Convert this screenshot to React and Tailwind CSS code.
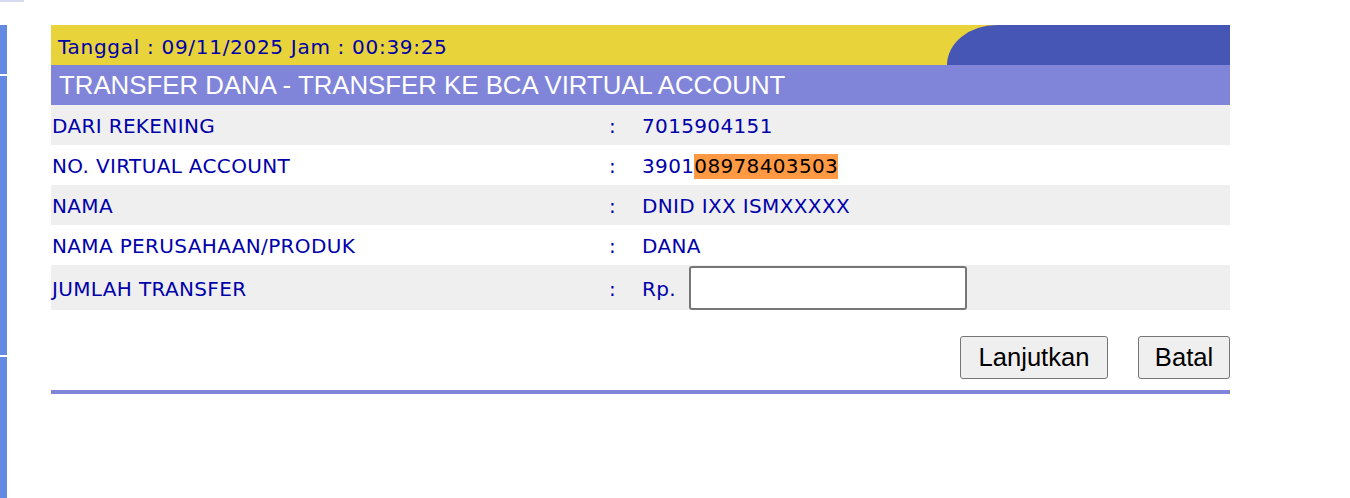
const rows = [
  { label: "DARI REKENING", value: "7015904151", bg: "bg-[#efefef]" },
  { label: "NO. VIRTUAL ACCOUNT", value: "va", bg: "bg-white" },
  { label: "NAMA", value: "DNID IXX ISMXXXXX", bg: "bg-[#efefef]" },
  { label: "NAMA PERUSAHAAN/PRODUK", value: "DANA", bg: "bg-white" },
];

function Row({ label, children, bg, tall }) {
  return (
    <div className={`flex items-center pt-[2px] ${bg} ${tall ? "h-[45px]" : "h-[40px]"}`}>
      <div className="w-[557px] pl-[1px]">{label}</div>
      <div className="w-[34px] pl-[1px]">:</div>
      <div className="flex items-center">{children}</div>
    </div>
  );
}

export default function App() {
  return (
    <div className="relative w-[1350px] h-[498px] bg-white overflow-hidden">
      <div className="absolute left-0 top-0 w-[24px] h-[2px] bg-[#d8dcf2]" />
      <div className="flex pt-[25px] h-full">
        {/* sidebar strip */}
        <div className="flex flex-col w-[7px] gap-[2px] h-full">
          <div className="h-[49px] bg-[#628ae0]" />
          <div className="h-[279px] bg-[#628ae0]" />
          <div className="flex-1 bg-[#628ae0]" />
        </div>

        <div className="ml-[44px] w-[1179px] text-[#0000aa] text-[20px] tracking-[0.35px] font-['DejaVu_Sans',sans-serif]">
          <div className="relative h-[40px] bg-[#e8d33a] flex items-center pl-[7px] pt-[4px] overflow-hidden">
            <span className="relative z-10 tracking-[0.7px]">Tanggal : 09/11/2025 Jam : 00:39:25</span>
            <svg className="absolute right-0 top-0" width="283" height="40" viewBox="0 0 283 40">
              <path d="M0 40 A50 40 0 0 1 50 0 L283 0 L283 40 Z" fill="#4556b4" />
            </svg>
          </div>
          <div className="h-[40px] bg-[#8185d9] flex items-center pl-[8px] text-white text-[25.8px] tracking-normal font-['Liberation_Sans',Arial,sans-serif]">
            TRANSFER DANA - TRANSFER KE BCA VIRTUAL ACCOUNT
          </div>

          {rows.map((r) => (
            <Row key={r.label} label={r.label} bg={r.bg}>
              {r.value === "va" ? (
                <span>
                  3901<span className="bg-[#ff9944] text-black inline-block leading-[25px]">08978403503</span>
                </span>
              ) : (
                r.value
              )}
            </Row>
          ))}
          <Row label="JUMLAH TRANSFER" bg="bg-[#efefef]" tall>
            <span className="mr-[13px]">Rp.</span>
            <input
              type="text"
              className="w-[278px] h-[44px] border-2 border-[#767676] rounded-[3px] bg-white outline-none -mt-[2px]"
            />
          </Row>

          <div className="flex justify-end gap-[30px] mt-[26px] font-['Liberation_Sans',Arial,sans-serif] text-[25.6px] tracking-normal text-black">
            <button className="h-[43px] w-[148px] bg-[#efefef] border border-[#767676] rounded-[3px]">
              Lanjutkan
            </button>
            <button className="h-[43px] w-[92px] bg-[#efefef] border border-[#767676] rounded-[3px]">
              Batal
            </button>
          </div>
          <div className="mt-[11px] h-[4px] bg-[#8185d9]" />
        </div>
      </div>
    </div>
  );
}
